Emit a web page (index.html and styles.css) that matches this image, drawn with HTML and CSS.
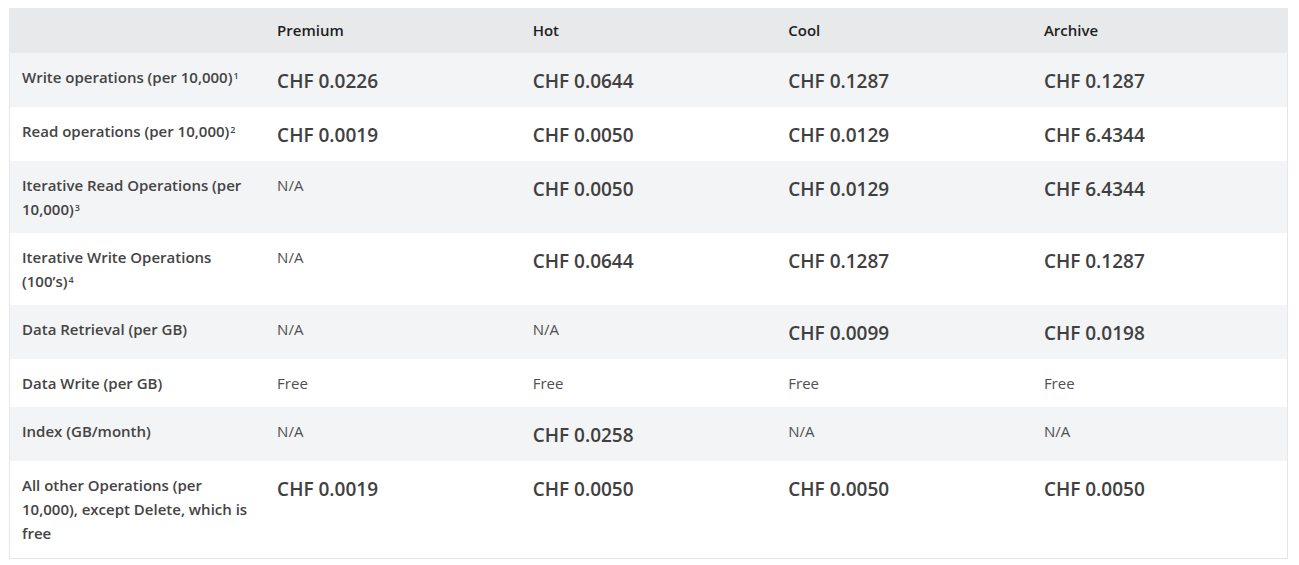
FILE: index.html
```html
<!DOCTYPE html>
<html lang="en">
<head>
<meta charset="utf-8">
<title>Pricing</title>
<link rel="stylesheet" href="styles.css">
</head>
<body>
<table class="pricing">
  <colgroup>
    <col class="c"><col class="c"><col class="c"><col class="c"><col class="c">
  </colgroup>
  <thead>
    <tr><th></th><th>Premium</th><th>Hot</th><th>Cool</th><th>Archive</th></tr>
  </thead>
  <tbody>
    <tr>
      <td class="label">Write operations (per 10,000)<sup>1</sup></td>
      <td class="price">CHF 0.0226</td><td class="price">CHF 0.0644</td><td class="price">CHF 0.1287</td><td class="price">CHF 0.1287</td>
    </tr>
    <tr>
      <td class="label">Read operations (per 10,000)<sup>2</sup></td>
      <td class="price">CHF 0.0019</td><td class="price">CHF 0.0050</td><td class="price">CHF 0.0129</td><td class="price">CHF 6.4344</td>
    </tr>
    <tr>
      <td class="label">Iterative Read Operations (per 10,000)<sup>3</sup></td>
      <td class="plain">N/A</td><td class="price">CHF 0.0050</td><td class="price">CHF 0.0129</td><td class="price">CHF 6.4344</td>
    </tr>
    <tr>
      <td class="label">Iterative Write Operations (100’s)<sup>4</sup></td>
      <td class="plain">N/A</td><td class="price">CHF 0.0644</td><td class="price">CHF 0.1287</td><td class="price">CHF 0.1287</td>
    </tr>
    <tr>
      <td class="label">Data Retrieval (per GB)</td>
      <td class="plain">N/A</td><td class="plain">N/A</td><td class="price">CHF 0.0099</td><td class="price">CHF 0.0198</td>
    </tr>
    <tr>
      <td class="label">Data Write (per GB)</td>
      <td class="plain">Free</td><td class="plain">Free</td><td class="plain">Free</td><td class="plain">Free</td>
    </tr>
    <tr>
      <td class="label">Index (GB/month)</td>
      <td class="plain">N/A</td><td class="price">CHF 0.0258</td><td class="plain">N/A</td><td class="plain">N/A</td>
    </tr>
    <tr class="last">
      <td class="label">All other Operations (per 10,000), except Delete, which is free</td>
      <td class="price">CHF 0.0019</td><td class="price">CHF 0.0050</td><td class="price">CHF 0.0050</td><td class="price">CHF 0.0050</td>
    </tr>
  </tbody>
</table>
</body>
</html>
```

FILE: styles.css
```css
html, body {
  margin: 0;
  padding: 0;
  background: #ffffff;
}

body {
  padding: 8px 11px 0 9px;
  font-family: "Segoe UI", "Open Sans", "Noto Sans", sans-serif;
  color: #404040;
}

.pricing {
  width: 1279px;
  border-collapse: collapse;
  table-layout: fixed;
  border: 1px solid #e6e6e6;
  border-top: none;
}

.pricing .c {
  width: 20%;
}

.pricing th {
  background: #e8e9eb;
  color: #1e1e1e;
  font-size: 15px;
  font-weight: 600;
  text-align: left;
  line-height: 24px;
  padding: 10px 12px 11px 12px;
  border: none;
}

.pricing thead tr {
  border-left: 1px solid #e8e9eb;
  border-right: 1px solid #e8e9eb;
}

.pricing tbody tr:nth-child(odd) td {
  background: #f3f4f6;
}

.pricing td {
  vertical-align: top;
  text-align: left;
  padding: 12px 12px 12px 12px;
}

.pricing tr.last td {
  padding-bottom: 13px;
}

.pricing td.label {
  font-size: 15px;
  font-weight: 600;
  line-height: 24px;
  color: #444444;
}

.pricing td.price {
  font-size: 19px;
  font-weight: 600;
  line-height: 28px;
  padding-top: 14px;
  color: #404040;
}

.pricing td.plain {
  font-size: 15px;
  font-weight: 400;
  line-height: 24px;
  color: #505050;
}

.pricing sup {
  font-size: 9px;
  line-height: 0;
  vertical-align: 4px;
  margin-left: 1px;
}
```
